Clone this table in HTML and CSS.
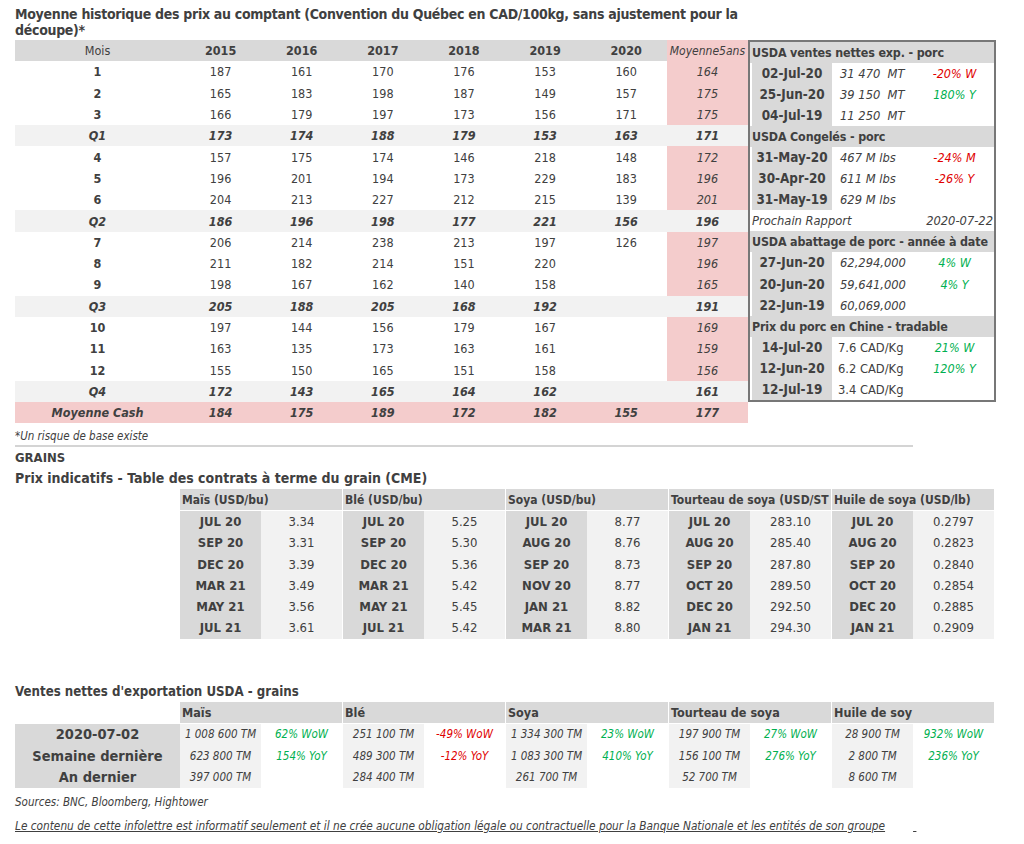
FILE: index.html
```html
<!DOCTYPE html>
<html lang="fr">
<head>
<meta charset="utf-8">
<title>Prix au comptant</title>
<link rel="stylesheet" href="styles.css">
</head>
<body>
<div class="page">
  <h1 class="title">Moyenne historique des prix au comptant (Convention du Québec en CAD/100kg, sans ajustement pour la découpe)*</h1>

  <div class="top">
    <table class="hist">
      <colgroup>
        <col class="c-mois"><col class="c-yr"><col class="c-yr"><col class="c-yr"><col class="c-yr"><col class="c-yr"><col class="c-yr"><col class="c-yr">
      </colgroup>
      <tr class="head"><td class="mois-h">Mois</td><td>2015</td><td>2016</td><td>2017</td><td>2018</td><td>2019</td><td>2020</td><td class="avg">Moyenne5ans</td></tr>
      <tr><td class="m">1</td><td>187</td><td>161</td><td>170</td><td>176</td><td>153</td><td>160</td><td class="avg">164</td></tr>
      <tr><td class="m">2</td><td>165</td><td>183</td><td>198</td><td>187</td><td>149</td><td>157</td><td class="avg">175</td></tr>
      <tr><td class="m">3</td><td>166</td><td>179</td><td>197</td><td>173</td><td>156</td><td>171</td><td class="avg">175</td></tr>
      <tr class="q"><td>Q1</td><td>173</td><td>174</td><td>188</td><td>179</td><td>153</td><td>163</td><td>171</td></tr>
      <tr><td class="m">4</td><td>157</td><td>175</td><td>174</td><td>146</td><td>218</td><td>148</td><td class="avg">172</td></tr>
      <tr><td class="m">5</td><td>196</td><td>201</td><td>194</td><td>173</td><td>229</td><td>183</td><td class="avg">196</td></tr>
      <tr><td class="m">6</td><td>204</td><td>213</td><td>227</td><td>212</td><td>215</td><td>139</td><td class="avg">201</td></tr>
      <tr class="q"><td>Q2</td><td>186</td><td>196</td><td>198</td><td>177</td><td>221</td><td>156</td><td>196</td></tr>
      <tr><td class="m">7</td><td>206</td><td>214</td><td>238</td><td>213</td><td>197</td><td>126</td><td class="avg">197</td></tr>
      <tr><td class="m">8</td><td>211</td><td>182</td><td>214</td><td>151</td><td>220</td><td></td><td class="avg">196</td></tr>
      <tr><td class="m">9</td><td>198</td><td>167</td><td>162</td><td>140</td><td>158</td><td></td><td class="avg">165</td></tr>
      <tr class="q"><td>Q3</td><td>205</td><td>188</td><td>205</td><td>168</td><td>192</td><td></td><td>191</td></tr>
      <tr><td class="m">10</td><td>197</td><td>144</td><td>156</td><td>179</td><td>167</td><td></td><td class="avg">169</td></tr>
      <tr><td class="m">11</td><td>163</td><td>135</td><td>173</td><td>163</td><td>161</td><td></td><td class="avg">159</td></tr>
      <tr><td class="m">12</td><td>155</td><td>150</td><td>165</td><td>151</td><td>158</td><td></td><td class="avg">156</td></tr>
      <tr class="q"><td>Q4</td><td>172</td><td>143</td><td>165</td><td>164</td><td>162</td><td></td><td>161</td></tr>
      <tr class="cash"><td>Moyenne Cash</td><td>184</td><td>175</td><td>189</td><td>172</td><td>182</td><td>155</td><td>177</td></tr>
    </table>

    <div class="usda">
      <table class="box">
        <colgroup><col class="c-date"><col class="c-val"><col class="c-chg"></colgroup>
        <tr class="sec"><td colspan="3">USDA ventes nettes exp. - porc</td></tr>
        <tr><td class="d">02-Jul-20</td><td class="v">31 470&nbsp; MT</td><td class="chg red">-20% W</td></tr>
        <tr><td class="d">25-Jun-20</td><td class="v">39 150&nbsp; MT</td><td class="chg green">180% Y</td></tr>
        <tr><td class="d">04-Jul-19</td><td class="v">11 250&nbsp; MT</td><td class="chg"></td></tr>
        <tr class="sec"><td colspan="3">USDA Congelés - porc</td></tr>
        <tr><td class="d">31-May-20</td><td class="v">467 M lbs</td><td class="chg red">-24% M</td></tr>
        <tr><td class="d">30-Apr-20</td><td class="v">611 M lbs</td><td class="chg red">-26% Y</td></tr>
        <tr><td class="d">31-May-19</td><td class="v">629 M lbs</td><td class="chg"></td></tr>
        <tr class="next"><td colspan="2" class="next-l">Prochain Rapport</td><td class="next-r">2020-07-22</td></tr>
        <tr class="sec"><td colspan="3">USDA abattage de porc - année à date</td></tr>
        <tr><td class="d">27-Jun-20</td><td class="v">62,294,000</td><td class="chg green">4% W</td></tr>
        <tr><td class="d">20-Jun-20</td><td class="v">59,641,000</td><td class="chg green">4% Y</td></tr>
        <tr><td class="d">22-Jun-19</td><td class="v">60,069,000</td><td class="chg"></td></tr>
        <tr class="sec"><td colspan="3">Prix du porc en Chine - tradable</td></tr>
        <tr><td class="d">14-Jul-20</td><td class="v up">7.6 CAD/Kg</td><td class="chg green">21% W</td></tr>
        <tr><td class="d">12-Jun-20</td><td class="v up">6.2 CAD/Kg</td><td class="chg green">120% Y</td></tr>
        <tr><td class="d">12-Jul-19</td><td class="v up">3.4 CAD/Kg</td><td class="chg"></td></tr>
      </table>
    </div>
  </div>

  <p class="note">*Un risque de base existe</p>
  <hr class="rule">

  <h2 class="sub sub-grains">GRAINS</h2>
  <h2 class="sub">Prix indicatifs - Table des contrats à terme du grain (CME)</h2>

  <table class="grain">
    <colgroup>
      <col class="g-l"><col class="g-v"><col class="g-l2"><col class="g-v"><col class="g-l2"><col class="g-v"><col class="g-l2"><col class="g-v"><col class="g-l2"><col class="g-v">
    </colgroup>
    <tr class="gh"><td colspan="2">Maïs (USD/bu)</td><td colspan="2" class="sep">Blé (USD/bu)</td><td colspan="2" class="sep">Soya (USD/bu)</td><td colspan="2" class="sep">Tourteau de soya (USD/ST</td><td colspan="2" class="sep">Huile de soya (USD/lb)</td></tr>
    <tr><td class="gl">JUL 20</td><td class="gv">3.34</td><td class="gl sep">JUL 20</td><td class="gv">5.25</td><td class="gl sep">JUL 20</td><td class="gv">8.77</td><td class="gl sep">JUL 20</td><td class="gv">283.10</td><td class="gl sep">JUL 20</td><td class="gv">0.2797</td></tr>
    <tr><td class="gl">SEP 20</td><td class="gv">3.31</td><td class="gl sep">SEP 20</td><td class="gv">5.30</td><td class="gl sep">AUG 20</td><td class="gv">8.76</td><td class="gl sep">AUG 20</td><td class="gv">285.40</td><td class="gl sep">AUG 20</td><td class="gv">0.2823</td></tr>
    <tr><td class="gl">DEC 20</td><td class="gv">3.39</td><td class="gl sep">DEC 20</td><td class="gv">5.36</td><td class="gl sep">SEP 20</td><td class="gv">8.73</td><td class="gl sep">SEP 20</td><td class="gv">287.80</td><td class="gl sep">SEP 20</td><td class="gv">0.2840</td></tr>
    <tr><td class="gl">MAR 21</td><td class="gv">3.49</td><td class="gl sep">MAR 21</td><td class="gv">5.42</td><td class="gl sep">NOV 20</td><td class="gv">8.77</td><td class="gl sep">OCT 20</td><td class="gv">289.50</td><td class="gl sep">OCT 20</td><td class="gv">0.2854</td></tr>
    <tr><td class="gl">MAY 21</td><td class="gv">3.56</td><td class="gl sep">MAY 21</td><td class="gv">5.45</td><td class="gl sep">JAN 21</td><td class="gv">8.82</td><td class="gl sep">DEC 20</td><td class="gv">292.50</td><td class="gl sep">DEC 20</td><td class="gv">0.2885</td></tr>
    <tr><td class="gl">JUL 21</td><td class="gv">3.61</td><td class="gl sep">JUL 21</td><td class="gv">5.42</td><td class="gl sep">MAR 21</td><td class="gv">8.80</td><td class="gl sep">JAN 21</td><td class="gv">294.30</td><td class="gl sep">JAN 21</td><td class="gv">0.2909</td></tr>
  </table>

  <h2 class="sub sub-ventes">Ventes nettes d'exportation USDA - grains</h2>

  <table class="ventes">
    <colgroup>
      <col class="v-lab"><col class="g-l"><col class="g-v"><col class="g-l2"><col class="g-v"><col class="g-l2"><col class="g-v"><col class="g-l2"><col class="g-v"><col class="g-l2"><col class="g-v">
    </colgroup>
    <tr class="gh"><td class="blank"></td><td colspan="2">Maïs</td><td colspan="2" class="sep">Blé</td><td colspan="2" class="sep">Soya</td><td colspan="2" class="sep">Tourteau de soya</td><td colspan="2" class="sep">Huile de soy</td></tr>
    <tr><td class="vl">2020-07-02</td><td class="vv">1 008 600 TM</td><td class="vc green">62% WoW</td><td class="vv sep">251 100 TM</td><td class="vc red">-49% WoW</td><td class="vv sep">1 334 300 TM</td><td class="vc green">23% WoW</td><td class="vv sep">197 900 TM</td><td class="vc green">27% WoW</td><td class="vv sep">28 900 TM</td><td class="vc green">932% WoW</td></tr>
    <tr><td class="vl">Semaine dernière</td><td class="vv">623 800 TM</td><td class="vc green">154% YoY</td><td class="vv sep">489 300 TM</td><td class="vc red">-12% YoY</td><td class="vv sep">1 083 300 TM</td><td class="vc green">410% YoY</td><td class="vv sep">156 100 TM</td><td class="vc green">276% YoY</td><td class="vv sep">2 800 TM</td><td class="vc green">236% YoY</td></tr>
    <tr><td class="vl">An dernier</td><td class="vv">397 000 TM</td><td class="vc"></td><td class="vv sep">284 400 TM</td><td class="vc"></td><td class="vv sep">261 700 TM</td><td class="vc"></td><td class="vv sep">52 700 TM</td><td class="vc"></td><td class="vv sep">8 600 TM</td><td class="vc"></td></tr>
  </table>

  <p class="sources">Sources: BNC, Bloomberg, Hightower</p>
  <p class="disclaimer"><span class="u">Le contenu de cette infolettre est informatif seulement et il ne crée aucune obligation légale ou contractuelle pour la Banque Nationale et les entités de son groupe</span><span class="u tail">&nbsp;</span></p>
</div>
</body>
</html>
```

FILE: styles.css
```css
* { box-sizing: border-box; }

body {
  margin: 0;
  font-family: "DejaVu Sans Condensed", "Open Sans", sans-serif;
  font-stretch: condensed;
  color: #404040;
  background: #fff;
}

.page {
  padding: 6px 0 0 15px;
}

.title {
  margin: 0;
  width: 760px;
  font-size: 14px;
  letter-spacing: -0.3px;
  line-height: 16px;
  font-weight: bold;
}

.top {
  display: flex;
  align-items: flex-start;
  margin-top: 2px;
}

table {
  border-collapse: separate;
  border-spacing: 0;
  table-layout: fixed;
}

td {
  padding: 0;
  white-space: nowrap;
  overflow: hidden;
}

/* ---------- historical table ---------- */
.hist {
  width: 733px;
}
.hist .c-mois { width: 165px; }
.hist .c-yr { width: 81.14px; }
.hist tr { height: 21.3px; }
.hist td {
  text-align: center;
  font-size: 12.5px;
}
.hist .head td {
  background: #d9d9d9;
  font-weight: bold;
}
.hist .head td.mois-h { font-weight: normal; }
.hist .head td.avg {
  background: #f4cccc;
  font-weight: normal;
  font-style: italic;
  font-size: 12px;
}
.hist td.m { font-weight: bold; }
.hist td.avg {
  background: #f4cccc;
  font-style: italic;
}
.hist .q td {
  background: #f2f2f2;
  font-weight: bold;
  font-style: italic;
}
.hist .cash td {
  background: #f4cccc;
  font-weight: bold;
  font-style: italic;
}

/* ---------- USDA box ---------- */
.usda {
  width: 248px;
  height: 362px;
  border: 2px solid #777;
}
.box {
  width: 244px;
}
.box .c-date { width: 82px; }
.box .c-val { width: 83px; }
.box .c-chg { width: 79px; }
.box tr { height: 21.06px; }
.box td { font-size: 12.8px; }
.box .sec td {
  background: #d9d9d9;
  font-weight: bold;
  font-size: 12.4px;
  letter-spacing: -0.15px;
  padding-left: 2px;
  text-align: left;
}
.box td.d {
  background: #d9d9d9;
  border-left: 2px solid #fff;
  font-weight: bold;
  font-size: 13.4px;
  text-align: center;
}
.box td.v {
  font-style: italic;
  padding-left: 8px;
}
.box td.v.up { font-style: normal; padding-left: 6px; }
.box td.chg {
  font-style: italic;
  font-size: 12.5px;
  text-align: center;
}
.box td.next-l {
  font-style: italic;
  padding-left: 2px;
}
.box td.next-r {
  font-style: italic;
  text-align: right;
  padding-right: 1px;
  overflow: visible;
}

.red { color: #e00000; }
.green { color: #00b050; }

/* ---------- notes ---------- */
.note {
  margin: 6px 0 0;
  font-size: 11.5px;
  line-height: 14px;
  font-style: italic;
}
.rule {
  margin: 2px 0 0;
  width: 898px;
  height: 2px;
  border: 0;
  background: #d4d4d4;
}

.sub {
  margin: 0;
  font-size: 14px;
  line-height: 21px;
  font-weight: bold;
}
.sub-grains { font-size: 13px; }
.sub-ventes {
  margin-top: 42px;
  font-size: 13.2px;
}

/* ---------- grain table ---------- */
.grain {
  margin-left: 165px;
  width: 814px;
}
.g-l { width: 81px; }
.g-l2 { width: 82px; }
.g-v { width: 81px; }
.grain tr { height: 21.3px; }
.grain tr.gh { height: 21.5px; }
.gh td {
  background: #d9d9d9;
  font-weight: bold;
  font-size: 12px;
  text-align: left;
  padding-left: 2px;
  border-bottom: 1.5px solid #fff;
}
.ventes .gh td { font-size: 12.5px; }
.gh td.blank { background: #fff; }
td.sep { border-left: 1px solid #fff; }
.gl {
  background: #d9d9d9;
  font-weight: bold;
  font-size: 13px;
  text-align: center;
}
.gv {
  background: #f2f2f2;
  font-size: 13px;
  text-align: center;
}

/* ---------- ventes table ---------- */
.ventes {
  width: 979px;
}
.v-lab { width: 165px; }
.ventes tr { height: 21.3px; }
.ventes tr.gh { height: 22px; }
.vl {
  background: #d9d9d9;
  font-weight: bold;
  font-size: 14.5px;
  text-align: center;
}
.vv {
  background: #f2f2f2;
  font-style: italic;
  font-size: 11.5px;
  text-align: center;
}
.vc {
  font-style: italic;
  font-size: 11.5px;
  text-align: center;
}

.sources {
  margin: 6px 0 0;
  font-size: 11.5px;
  line-height: 16px;
  font-style: italic;
}
.disclaimer {
  margin: 8px 0 0;
  font-size: 11.75px;
  line-height: 16px;
  font-style: italic;
}
.u { text-decoration: underline; }
.tail {
  display: inline-block;
  width: 5px;
  margin-left: 28px;
}
```
